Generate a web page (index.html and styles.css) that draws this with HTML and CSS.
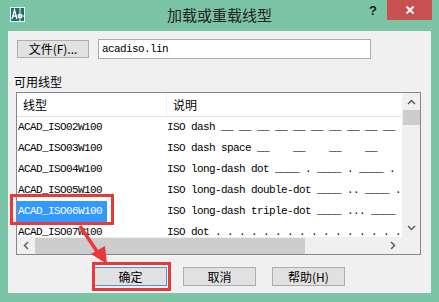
FILE: index.html
```html
<!DOCTYPE html>
<html lang="zh-CN">
<head>
    <meta charset="UTF-8">
    <meta name="viewport" content="width=device-width, initial-scale=1.0">
    <title>加载或重载线型</title>
    <link rel="stylesheet" href="styles.css">
</head>
<body>
    <div class="window">
        <!-- Title bar -->
        <div class="titlebar">
            <svg class="app-icon" width="15" height="15" viewBox="0 0 15 15">
                <rect x="0.5" y="0.5" width="14" height="14" fill="#1f6f62" stroke="#e8f4ef"/>
                <path d="M2 12 L4.5 3 L7 12 M3.2 9 H5.8" stroke="#ffffff" stroke-width="1.3" fill="none"/>
                <path d="M10 1 V14 M7.5 9 H14" stroke="#ffffff" stroke-width="1"/>
                <rect x="8.5" y="7.5" width="3" height="3" fill="none" stroke="#ffffff"/>
            </svg>
            <div class="title">加载或重载线型</div>
            <div class="controls">
                <span class="help">?</span>
                <span class="close">
                    <svg width="10" height="10" viewBox="0 0 10 10">
                        <path d="M1.5 1.5 L8.5 8.5 M8.5 1.5 L1.5 8.5" stroke="#ffffff" stroke-width="1.8"/>
                    </svg>
                </span>
            </div>
        </div>

        <!-- Client area -->
        <div class="client">
            <div class="file-row">
                <button class="btn file-btn">文件(F)...</button>
                <div class="file-input">acadiso.lin</div>
            </div>

            <div class="group-label">可用线型</div>

            <div class="listbox">
                <div class="list-main">
                    <div class="list-header">
                        <div class="col-name">线型</div>
                        <div class="col-desc">说明</div>
                    </div>
                    <div class="row"><div class="cell-name"><span>ACAD_ISO02W100</span></div><div class="cell-desc">ISO dash __ __ __ __ __ __ __ __ __ __</div></div>
                    <div class="row"><div class="cell-name"><span>ACAD_ISO03W100</span></div><div class="cell-desc">ISO dash space __    __    __    __</div></div>
                    <div class="row"><div class="cell-name"><span>ACAD_ISO04W100</span></div><div class="cell-desc">ISO long-dash dot ____ . ____ . ____ .</div></div>
                    <div class="row"><div class="cell-name"><span>ACAD_ISO05W100</span></div><div class="cell-desc">ISO long-dash double-dot ____ .. ____ .</div></div>
                    <div class="row"><div class="cell-name"><span class="selected">ACAD_ISO06W100</span></div><div class="cell-desc">ISO long-dash triple-dot ____ ... ____</div></div>
                    <div class="row"><div class="cell-name"><span>ACAD_ISO07W100</span></div><div class="cell-desc">ISO dot . . . . . . . . . . . . . . . .</div></div>
                </div>

                <div class="vscroll">
                    <svg class="arrow" width="9" height="6" viewBox="0 0 9 6"><path d="M1 5 L4.5 1.5 L8 5" stroke="#606060" stroke-width="1.5" fill="none"/></svg>
                    <div class="vthumb"></div>
                    <div class="vtrack"></div>
                    <svg class="arrow" width="9" height="6" viewBox="0 0 9 6"><path d="M1 1 L4.5 4.5 L8 1" stroke="#606060" stroke-width="1.5" fill="none"/></svg>
                </div>

                <div class="hscroll">
                    <svg class="arrow" width="6" height="9" viewBox="0 0 6 9"><path d="M5 1 L1.5 4.5 L5 8" stroke="#606060" stroke-width="1.5" fill="none"/></svg>
                    <div class="hthumb"></div>
                    <div class="htrack"></div>
                    <svg class="arrow" width="6" height="9" viewBox="0 0 6 9"><path d="M1 1 L4.5 4.5 L1 8" stroke="#606060" stroke-width="1.5" fill="none"/></svg>
                </div>

                <div class="corner"></div>
            </div>

            <div class="button-row">
                <button class="btn default">确定</button>
                <button class="btn">取消</button>
                <button class="btn">帮助(H)</button>
            </div>
        </div>

        <!-- Annotations drawn over the dialog -->
        <div class="mark mark-row"></div>
        <div class="mark mark-ok"></div>
        <svg class="mark-arrow" width="40" height="45" viewBox="0 0 40 45">
            <path d="M6 2 L24 29" stroke="#e8393a" stroke-width="3.5" fill="none"/>
            <polygon points="17,30 31,22 33,40" fill="#e8393a"/>
        </svg>
    </div>
</body>
</html>
```

FILE: styles.css
```css
body {
    margin: 0;
    font-family: "Noto Sans CJK SC", "Liberation Sans", sans-serif;
    font-size: 12px;
    color: #000;
    background-color: #7cc4a6;
}
.window {
    position: relative;
    width: 439px;
    height: 302px;
    display: flex;
    flex-direction: column;
    background-color: #7cc4a6;
    overflow: hidden;
}

/* title bar */
.titlebar {
    height: 31px;
    display: grid;
    grid-template-columns: 1fr auto 1fr;
    align-items: start;
}
.app-icon {
    margin: 7px 0 0 10px;
}
.title {
    font-size: 15px;
    line-height: 30px;
    color: #222;
}
.controls {
    display: flex;
    justify-content: flex-end;
    margin-right: 7px;
}
.help {
    font-family: "Liberation Sans", sans-serif;
    font-weight: bold;
    font-size: 13px;
    line-height: 22px;
    color: #1a1a1a;
    margin-right: 10px;
}
.close {
    width: 45px;
    height: 20px;
    background-color: #c75050;
    display: flex;
    align-items: center;
    justify-content: center;
}

/* client area */
.client {
    margin: 0 8px;
    height: 262px;
    background-color: #f0f0f0;
    display: flex;
    flex-direction: column;
}
.file-row {
    display: flex;
    align-items: center;
    gap: 9px;
    margin: 8px 0 0 9px;
    height: 20px;
}
.btn {
    font-family: "Noto Sans CJK SC", sans-serif;
    font-size: 12px;
    width: 73px;
    height: 19px;
    padding: 0;
    line-height: 17px;
    border: 1px solid #adadad;
    background-color: #e1e1e1;
    color: #000;
}
.file-btn {
    width: 72px;
    height: 18px;
    line-height: 16px;
}
.btn.default {
    border-color: #3c9ae6;
}
.file-input {
    width: 268px;
    height: 18px;
    border: 1px solid #abadb3;
    background: #fff;
    font-family: "Liberation Mono", monospace;
    font-size: 11px;
    letter-spacing: -0.6px;
    line-height: 18px;
    padding-left: 3px;
    box-sizing: content-box;
}
.group-label {
    margin: 15px 0 0 6px;
    line-height: 16px;
}

/* list view */
.listbox {
    margin: 2px 0 0 8px;
    width: 403px;
    height: 161px;
    border: 1px solid #828790;
    background: #fff;
    display: grid;
    grid-template-columns: 385px 18px;
    grid-template-rows: 144px 17px;
}
.list-main {
    overflow: hidden;
    font-family: "Liberation Mono", monospace;
    font-size: 11px;
    letter-spacing: -0.6px;
}
.list-header {
    display: flex;
    height: 23px;
    border-bottom: 1px solid #e5e5e5;
    font-family: "Noto Sans CJK SC", sans-serif;
    font-size: 12px;
    letter-spacing: 0;
    line-height: 23px;
}
.col-name {
    width: 143px;
    padding-left: 6px;
    border-right: 1px solid #f0f0f0;
}
.col-desc {
    padding-left: 6px;
}
.row {
    display: flex;
    height: 21px;
    line-height: 21px;
    white-space: pre;
}
.cell-name {
    width: 150px;
    flex: none;
}
.cell-name span {
    display: inline-block;
    padding: 0 5px 0 1px;
}
.cell-name .selected {
    background-color: #3399ff;
    color: #fff;
}
.cell-desc {
    flex: none;
}

.vscroll {
    background: #f0f0f0;
    display: flex;
    flex-direction: column;
    align-items: center;
}
.vscroll .arrow {
    margin: 6px 0;
}
.vthumb {
    width: 17px;
    height: 15px;
    background: #cdcdcd;
    margin-top: -1px;
}
.vtrack {
    flex: 1;
}
.hscroll {
    background: #f0f0f0;
    display: flex;
    align-items: center;
}
.hscroll .arrow {
    margin: 0 6px;
}
.hthumb {
    width: 270px;
    height: 16px;
    background: #cdcdcd;
}
.htrack {
    flex: 1;
}
.corner {
    background: #f0f0f0;
}

.button-row {
    display: flex;
    gap: 16px;
    margin: 12px 0 0 86px;
}

/* red annotations */
.mark {
    position: absolute;
    border: 3px solid #e8393a;
    box-sizing: border-box;
}
.mark-row {
    left: 10px;
    top: 194px;
    width: 104px;
    height: 31px;
}
.mark-ok {
    left: 92px;
    top: 262px;
    width: 79px;
    height: 29px;
}
.mark-arrow {
    position: absolute;
    left: 74px;
    top: 224px;
}
```
